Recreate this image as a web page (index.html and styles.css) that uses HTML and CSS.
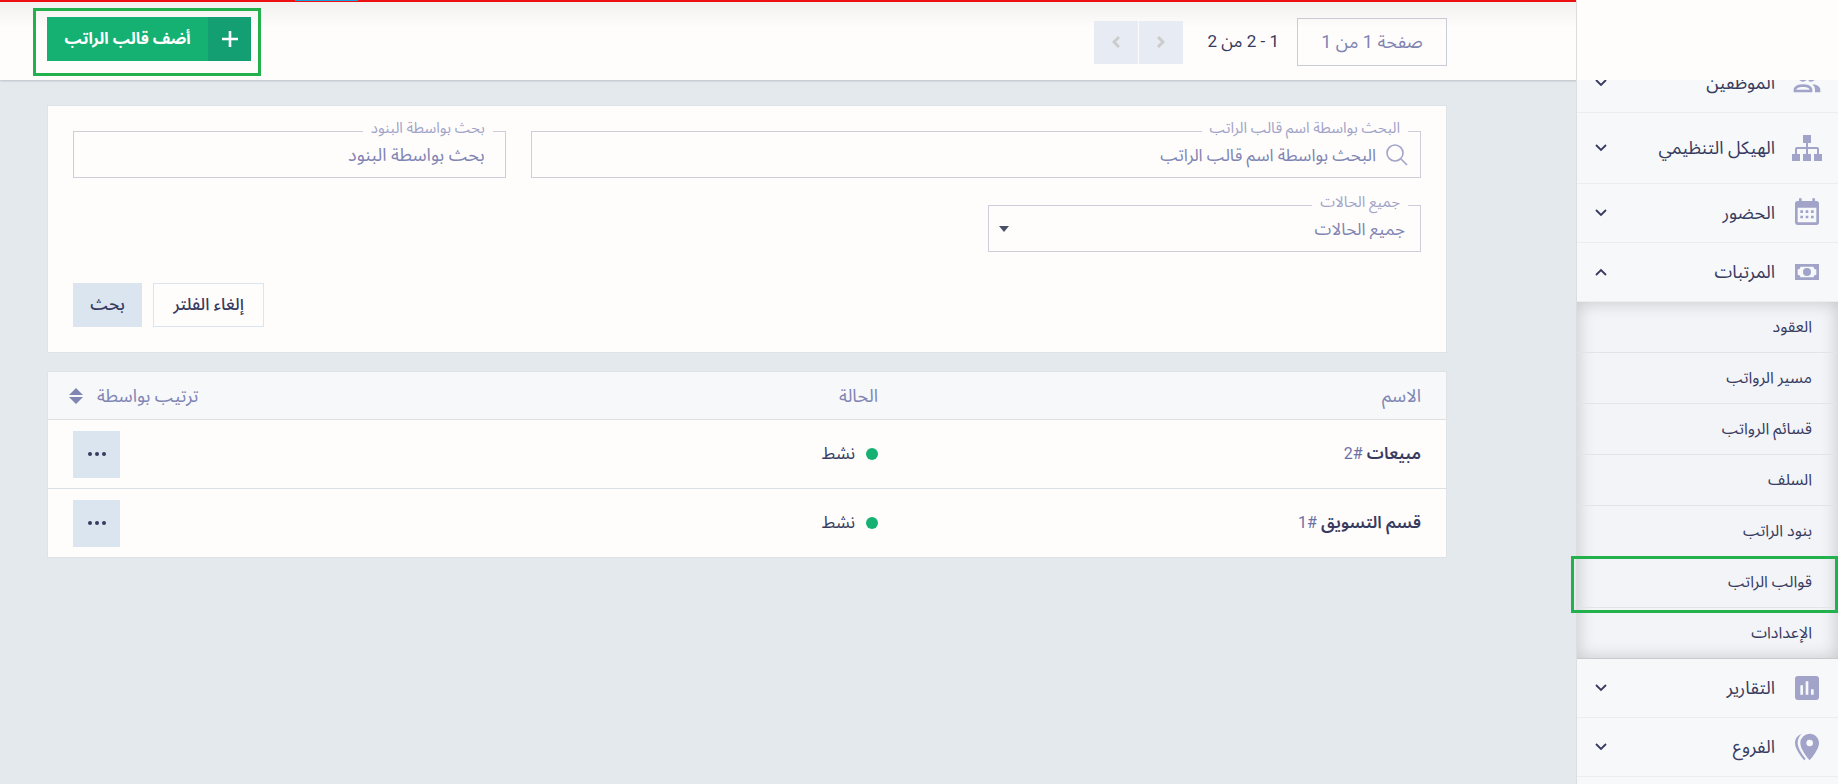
FILE: index.html
```html
<!DOCTYPE html>
<html lang="ar" dir="rtl">
<head>
  <meta charset="UTF-8" />
  <meta name="viewport" content="width=device-width, initial-scale=1.0" />
  <title>قوالب الراتب</title>
  <link rel="stylesheet" href="styles.css">
</head>
<body>
  <aside class="sidebar">
    <div class="brand"></div>
    <nav class="menu">
      <a class="menu-item" href="#">
        <svg class="menu-icon" viewBox="0 0 24 24"><path d="M13.07 10.41A5 5 0 0 0 13.07 4.59A3.39 3.39 0 0 1 15 4A3.5 3.5 0 0 1 15 11A3.39 3.39 0 0 1 13.07 10.41M5.5 7.5A3.5 3.5 0 1 1 9 11A3.5 3.5 0 0 1 5.5 7.5M7.5 7.5A1.5 1.5 0 1 0 9 6A1.5 1.5 0 0 0 7.5 7.5M16 17V19H2V17S2 13 9 13 16 17 16 17M14 17C13.86 16.22 12.67 15 9 15S4.07 16.31 4 17M15.95 13A5.32 5.32 0 0 1 18 17V19H22V17S22 13.37 15.94 13Z"/></svg>
        <span>الموظفين</span>
        <svg class="chevron" viewBox="0 0 12 8"><path d="M1 1l5 5 5-5"/></svg>
      </a>
      <a class="menu-item tall" href="#">
        <svg class="menu-icon" viewBox="0 0 32 32"><path d="M12 3h8v8h-3v4h9a2 2 0 0 1 2 2v5h3v7h-8v-7h3v-5h-9v5h3v7h-8v-7h3v-5H6v5h3v7H1v-7h3v-5a2 2 0 0 1 2-2h9v-4h-3z"/></svg>
        <span>الهيكل التنظيمي</span>
        <svg class="chevron" viewBox="0 0 12 8"><path d="M1 1l5 5 5-5"/></svg>
      </a>
      <a class="menu-item" href="#">
        <svg class="menu-icon" viewBox="0 0 24 24"><path d="M9,10V12H7V10H9M13,10V12H11V10H13M17,10V12H15V10H17M19,3A2,2 0 0,1 21,5V19A2,2 0 0,1 19,21H5C3.89,21 3,20.1 3,19V5A2,2 0 0,1 5,3H6V1H8V3H16V1H18V3H19M19,19V8H5V19H19M9,14V16H7V14H9M13,14V16H11V14H13M17,14V16H15V14H17Z"/></svg>
        <span>الحضور</span>
        <svg class="chevron" viewBox="0 0 12 8"><path d="M1 1l5 5 5-5"/></svg>
      </a>
      <a class="menu-item" href="#">
        <svg class="menu-icon" viewBox="0 0 24 24"><path d="M3,6H21V18H3V6M12,9A3,3 0 0,1 15,12A3,3 0 0,1 12,15A3,3 0 0,1 9,12A3,3 0 0,1 12,9M7,8A2,2 0 0,1 5,10V14A2,2 0 0,1 7,16H17A2,2 0 0,1 19,14V10A2,2 0 0,1 17,8H7Z"/></svg>
        <span>المرتبات</span>
        <svg class="chevron" viewBox="0 0 12 8"><path d="M1 7l5-5 5 5"/></svg>
      </a>
      <div class="submenu">
        <a href="#">العقود</a>
        <a href="#">مسير الرواتب</a>
        <a href="#">قسائم الرواتب</a>
        <a href="#">السلف</a>
        <a href="#">بنود الراتب</a>
        <a class="marked" href="#">قوالب الراتب</a>
        <a href="#">الإعدادات</a>
      </div>
      <a class="menu-item" href="#">
        <svg class="menu-icon" viewBox="0 0 24 24"><path d="M9 17H7V10H9V17M13 17H11V7H13V17M17 17H15V13H17V17M19 3H5C3.89 3 3 3.89 3 5V19C3 20.1 3.9 21 5 21H19C20.1 21 21 20.1 21 19V5C21 3.89 20.1 3 19 3Z"/></svg>
        <span>التقارير</span>
        <svg class="chevron" viewBox="0 0 12 8"><path d="M1 1l5 5 5-5"/></svg>
      </a>
      <a class="menu-item" href="#">
        <svg class="menu-icon" viewBox="0 0 24 24"><path d="M14,11.5A2.5,2.5 0 0,0 16.5,9A2.5,2.5 0 0,0 14,6.5A2.5,2.5 0 0,0 11.5,9A2.5,2.5 0 0,0 14,11.5M14,2C17.86,2 21,5.13 21,9C21,14.25 14,22 14,22C14,22 7,14.25 7,9A7,7 0 0,1 14,2M5,9C5,13.5 10.08,19.66 11,20.81L10,22C10,22 3,14.25 3,9C3,5.83 5.11,3.15 8,2.29C6.16,3.94 5,6.33 5,9Z"/></svg>
        <span>الفروع</span>
        <svg class="chevron" viewBox="0 0 12 8"><path d="M1 1l5 5 5-5"/></svg>
      </a>
    </nav>
  </aside>

  <div class="page">
    <header class="topbar">
      <div class="pagination">
        <button class="page-box" type="button">صفحة 1 من 1</button>
        <span class="page-count">1 - 2 من 2</span>
        <div class="pager">
          <button type="button" aria-label="السابق" disabled><svg viewBox="0 0 8 12"><path d="M1 1l5 5-5 5"/></svg></button>
          <button type="button" aria-label="التالي" disabled><svg viewBox="0 0 8 12"><path d="M7 1L2 6l5 5"/></svg></button>
        </div>
      </div>
      <div class="add-wrap">
        <button class="add-btn" type="button">
          <span class="add-icon"><svg viewBox="0 0 16 16"><path d="M8 0v16M0 8h16"/></svg></span>
          <span class="add-text">أضف قالب الراتب</span>
        </button>
      </div>
    </header>

    <main class="content">
      <form class="card filters">
        <div class="fields">
          <div class="field wide">
            <label for="name">البحث بواسطة اسم قالب الراتب</label>
            <svg class="search-icon" viewBox="0 0 22 22"><circle cx="9" cy="9" r="8"/><path d="M15 15l6 6"/></svg>
            <input id="name" type="text" placeholder="البحث بواسطة اسم قالب الراتب">
          </div>
          <div class="field">
            <label for="items">بحث بواسطة البنود</label>
            <input class="large" id="items" type="text" placeholder="بحث بواسطة البنود">
          </div>
          <div class="field">
            <label for="status">جميع الحالات</label>
            <select id="status">
              <option>جميع الحالات</option>
            </select>
            <span class="caret"></span>
          </div>
        </div>
        <div class="actions">
          <button class="btn btn-outline" type="reset">إلغاء الفلتر</button>
          <button class="btn" type="submit">بحث</button>
        </div>
      </form>

      <table class="card list">
        <thead>
          <tr>
            <th class="col-name">الاسم</th>
            <th>الحالة</th>
            <th class="col-sort">
              <button class="sort" type="button">ترتيب بواسطة
                <svg viewBox="0 0 14 16"><path d="M7 0l7 7H0zM7 16l7-7H0z"/></svg>
              </button>
            </th>
          </tr>
        </thead>
        <tbody>
          <tr>
            <td><strong>مبيعات</strong> <span class="num">#2</span></td>
            <td><span class="status">نشط</span></td>
            <td class="col-more"><button class="more" type="button" aria-label="خيارات"><svg viewBox="0 0 18 4"><circle cx="2" cy="2" r="2"/><circle cx="9" cy="2" r="2"/><circle cx="16" cy="2" r="2"/></svg></button></td>
          </tr>
          <tr>
            <td><strong>قسم التسويق</strong> <span class="num">#1</span></td>
            <td><span class="status">نشط</span></td>
            <td class="col-more"><button class="more" type="button" aria-label="خيارات"><svg viewBox="0 0 18 4"><circle cx="2" cy="2" r="2"/><circle cx="9" cy="2" r="2"/><circle cx="16" cy="2" r="2"/></svg></button></td>
          </tr>
        </tbody>
      </table>
    </main>
  </div>
</body>
</html>
```
FILE: styles.css
```css
* {
  box-sizing: border-box;
}
body {
  margin: 0;
  display: flex;
  height: 100vh;
  overflow: hidden;
  background-color: #e4e9ed;
  color: #373b5f;
  font-family: Roboto, "Noto Sans Arabic", "Noto Kufi Arabic", "DejaVu Sans", sans-serif;
  font-size: 17px;
}
a {
  color: inherit;
  text-decoration: none;
}
button,
input,
select {
  font: inherit;
  color: inherit;
  margin: 0;
}
svg {
  display: block;
}

/* sidebar */
.sidebar {
  flex: 0 0 261px;
  display: flex;
  flex-direction: column;
  background-color: #f6f8fa;
  box-shadow: -1px 0 0 #dedcdc;
  z-index: 2;
}
.brand {
  flex: 0 0 80px;
  background-color: #fffdfb;
  z-index: 1;
}
/* the list is scrolled a little under the logo */
.menu {
  margin-top: -26px;
}
.menu-item {
  display: flex;
  align-items: center;
  height: 59px;
  padding: 0 15px 0 18px;
  border-bottom: 1px solid #ededed;
  font-size: 18px;
}
.menu-item.tall {
  height: 71px;
}
.menu-item span {
  flex: 1;
  padding-right: 16px;
}
.menu-icon {
  width: 32px;
  height: 32px;
  fill: #a1a4c8;
}
.chevron {
  width: 12px;
  height: 8px;
  fill: none;
  stroke: #373b5f;
  stroke-width: 1.8;
}
.submenu {
  background-color: #f2f4f8;
  box-shadow: inset 0 0 18px rgba(0, 0, 0, 0.2);
}
.submenu a {
  display: flex;
  align-items: center;
  height: 51px;
  padding: 0 26px;
  border-bottom: 1px solid #e2e4e8;
  font-size: 16px;
}
.submenu a:last-child {
  border-bottom-color: #c8cacd;
}
.marked {
  position: relative;
}
.marked::after {
  content: "";
  position: absolute;
  inset: -1px 0 -6px -6px;
  border: 3px solid #22b14c;
}

/* top bar */
.page {
  flex: 1;
  min-width: 0;
}
.topbar {
  position: relative;
  display: flex;
  justify-content: space-between;
  align-items: center;
  height: 80px;
  padding: 4px 130px 0 33px;
  background: linear-gradient(#f1f0ef, #fffdfb 28px);
  box-shadow: 0 1px 2px rgba(60, 70, 90, 0.25);
}
.topbar::before {
  content: "";
  position: absolute;
  inset: 0 0 auto 0;
  height: 2px;
  background-color: #ee1111;
}
.topbar::after {
  content: "";
  position: absolute;
  top: 0;
  left: 295px;
  width: 63px;
  height: 1px;
  background-color: #14a3df;
}
.pagination {
  display: flex;
  align-items: center;
}
.page-box {
  width: 150px;
  height: 48px;
  border: 1px solid #c9ccd5;
  background-color: transparent;
  color: #8085b3;
  font-size: 18px;
}
.page-count {
  padding: 0 18px;
  min-width: 114px;
  font-size: 17px;
}
.pager {
  display: flex;
  gap: 1px;
}
.pager button {
  display: flex;
  align-items: center;
  justify-content: center;
  width: 44px;
  height: 43px;
  border: 0;
  padding: 0;
  background-color: #e7ecf4;
}
.pager svg {
  width: 8px;
  height: 12px;
  fill: none;
  stroke: #cccccc;
  stroke-width: 3;
}
.add-wrap {
  padding: 6px 7px 12px 11px;
  border: 3px solid #22b14c;
}
.add-btn {
  display: flex;
  height: 44px;
  padding: 0;
  border: 0;
  background-color: #14b172;
  color: #fff;
  font-size: 16px;
  font-weight: 700;
}
.add-icon {
  display: flex;
  align-items: center;
  justify-content: center;
  width: 43px;
  height: 44px;
  background-color: #139f71;
}
.add-icon svg {
  width: 16px;
  height: 16px;
  stroke: #fff;
  stroke-width: 2.6;
}
.add-text {
  width: 161px;
  line-height: 44px;
}

/* content */
.content {
  padding: 25px 130px 25px 47px;
}
.card {
  border: 1px solid #dfe2e6;
  background-color: #fffdfc;
}
.filters {
  padding: 25px;
  margin-bottom: 18px;
}
.fields {
  display: grid;
  grid-template-columns: repeat(3, 1fr);
  gap: 27px 25px;
}
.field {
  position: relative;
  display: flex;
  align-items: center;
  height: 47px;
  border: 1px solid #cdced9;
}
.field.wide {
  grid-column: span 2;
}
.field label {
  position: absolute;
  top: -14px;
  right: 12px;
  padding: 0 8px;
  background-color: #fffdfc;
  color: #a1a4c8;
  font-size: 15px;
  line-height: 20px;
}
.field input,
.field select {
  flex: 1;
  min-width: 0;
  height: 45px;
  padding: 0 20px;
  border: 0;
  outline: 0;
  background: transparent;
  color: #8085b3;
}
.field select {
  appearance: none;
  padding: 0 15px;
}
.field input.large {
  font-size: 18px;
}
.field input::placeholder {
  color: #8085b3;
  opacity: 1;
}
.search-icon {
  width: 22px;
  height: 22px;
  margin-right: 12px;
  fill: none;
  stroke: #a1a4c8;
  stroke-width: 1.6;
}
.field .search-icon + input {
  padding-right: 10px;
}
.caret {
  position: absolute;
  left: 10px;
  top: 20px;
  border: 5px solid transparent;
  border-top: 6px solid #4a5068;
  border-bottom: 0;
  pointer-events: none;
}
.actions {
  display: flex;
  justify-content: flex-end;
  gap: 11px;
  margin-top: 31px;
}
.btn {
  min-width: 69px;
  height: 44px;
  padding: 0 15px;
  border: 1px solid #dae5ef;
  background-color: #dae5ef;
  font-weight: 500;
}
.btn-outline {
  min-width: 111px;
  background-color: transparent;
}

/* list */
.list {
  width: 100%;
  border-collapse: separate;
  border-spacing: 0;
  table-layout: fixed;
}
.list th {
  height: 48px;
  padding: 0 25px;
  border-bottom: 1px solid #dbe0e5;
  background-color: #f6f8fa;
  color: #8085b3;
  font-size: 18px;
  font-weight: 400;
  text-align: right;
}
.list td {
  height: 68px;
  padding: 0 25px;
}
.list tr:first-child td {
  height: 69px;
  border-bottom: 1px solid #dbe0e5;
}
.list .col-name {
  width: 543px;
}
.list .col-more {
  text-align: left;
}
.list .col-sort {
  padding-left: 21px;
  text-align: left;
}
.list strong {
  font-weight: 600;
}
.num {
  color: #6c71a5;
  font-size: 16px;
}
.status {
  display: flex;
  align-items: center;
  gap: 11px;
}
.status::before {
  content: "";
  width: 12px;
  height: 12px;
  border-radius: 50%;
  background-color: #14b172;
}
.sort {
  display: inline-flex;
  align-items: center;
  gap: 14px;
  padding: 0;
  border: 0;
  background: transparent;
}
.sort svg {
  width: 14px;
  height: 16px;
  fill: #8085b3;
}
.more {
  display: inline-flex;
  align-items: center;
  justify-content: center;
  width: 47px;
  height: 47px;
  padding: 0;
  border: 0;
  background-color: #dae5ef;
  vertical-align: middle;
}
.more svg {
  width: 18px;
  height: 4px;
  fill: #373b5f;
}
```
